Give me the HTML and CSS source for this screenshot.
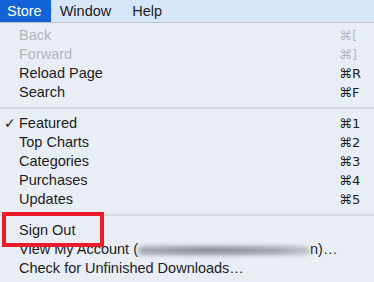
FILE: index.html
```html
<!DOCTYPE html>
<html lang="en">
<head>
  <meta charset="UTF-8">
  <title>Store menu</title>
  <link rel="stylesheet" href="styles.css">
</head>
<body>
  <header class="menubar">
    <span class="menubar-item active">Store</span>
    <span class="menubar-item">Window</span>
    <span class="menubar-item">Help</span>
  </header>

  <ul class="menu">
    <li class="item disabled"><span class="label">Back</span><span class="key">⌘[</span></li>
    <li class="item disabled"><span class="label">Forward</span><span class="key">⌘]</span></li>
    <li class="item"><span class="label">Reload Page</span><span class="key">⌘R</span></li>
    <li class="item"><span class="label">Search</span><span class="key">⌘F</span></li>
    <li class="sep"></li>
    <li class="item checked"><span class="label">Featured</span><span class="key">⌘1</span></li>
    <li class="item"><span class="label">Top Charts</span><span class="key">⌘2</span></li>
    <li class="item"><span class="label">Categories</span><span class="key">⌘3</span></li>
    <li class="item"><span class="label">Purchases</span><span class="key">⌘4</span></li>
    <li class="item"><span class="label">Updates</span><span class="key">⌘5</span></li>
    <li class="sep"></li>
    <li class="item"><span class="label">Sign Out</span></li>
    <li class="item"><span class="label">View My Account (<span class="blur" aria-hidden="true"></span>n)…</span></li>
    <li class="item"><span class="label">Check for Unfinished Downloads…</span></li>
  </ul>

  <div class="highlight-box"></div>
</body>
</html>
```

FILE: styles.css
```css
:root {
  --menu-bg: #e9eef5;
  --bar-bg: #d7e5f8;
  --select: #1462d8;
  --text: #1c1c1e;
  --muted: #b3b7bd;
  --red: #ea1c26;
}

* {
  margin: 0;
  padding: 0;
  box-sizing: border-box;
}

body {
  font-family: 'Liberation Sans', Arial, 'DejaVu Sans', sans-serif;
  font-size: 14.5px;
  background-color: var(--menu-bg);
  color: var(--text);
  width: 374px;
  height: 282px;
  overflow: hidden;
  position: relative;
}

.menubar {
  display: flex;
  height: 23px;
  background-color: var(--bar-bg);
  border-bottom: 1px solid #b9c2ce;
}

.menubar-item {
  line-height: 22px;
  margin-left: 21px;
}

.menubar-item.active {
  background-color: var(--select);
  color: #fff;
  padding: 0 9px 0 7px;
  margin-left: 0;
}

.menubar-item.active + .menubar-item {
  margin-left: 9px;
}

.menu {
  list-style: none;
  padding-top: 3px;
}

.item {
  display: flex;
  height: 19px;
  line-height: 19px;
  padding-left: 19px;
  position: relative;
}

.item .label {
  flex: 1;
  white-space: nowrap;
}

.item .key {
  width: 35px;
  font-family: 'DejaVu Sans', sans-serif;
  font-size: 13px;
}

.item.disabled {
  color: var(--muted);
}

.item.checked::before {
  content: "✓";
  position: absolute;
  left: 4px;
  top: 0;
  font-family: 'DejaVu Sans', sans-serif;
  font-size: 14px;
}

.sep {
  height: 2px;
  margin: 5px 0 5px;
  background-color: #d5dbe3;
}

.blur {
  display: inline-block;
  width: 172px;
  height: 9px;
  vertical-align: -1px;
  background: linear-gradient(90deg, #a9adb3, #8e9399 40%, #a2a6ac 80%, #c4c8cd);
  border-radius: 5px;
  filter: blur(2px);
}

.highlight-box {
  position: absolute;
  left: 2px;
  top: 212px;
  width: 102px;
  height: 35px;
  border: 4px solid var(--red);
}
```
